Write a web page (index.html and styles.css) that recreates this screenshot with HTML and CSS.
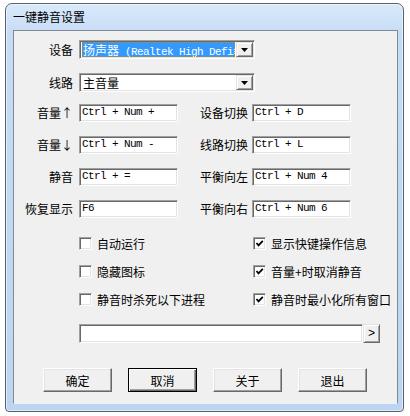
FILE: index.html
```html
<!DOCTYPE html>
<html lang="zh-CN">
<head>
  <meta charset="UTF-8" />
  <title>一键静音设置</title>
  <link rel="stylesheet" href="styles.css">
</head>
<body>

  <div class="window">
    <div class="titlebar">一键静音设置</div>

    <div class="client">

      <div class="row combo-row first">
        <span class="label">设备</span>
        <div class="combo">
          <div class="combo-value selected"><span class="cjk">扬声器</span><span class="mono"> (Realtek High Definition Audio)</span></div>
          <span class="drop"><svg width="7" height="4" viewBox="0 0 7 4"><polygon points="0,0 7,0 3.5,4" fill="#000"/></svg></span>
        </div>
      </div>

      <div class="row combo-row">
        <span class="label">线路</span>
        <div class="combo">
          <div class="combo-value"><span class="cjk">主音量</span></div>
          <span class="drop"><svg width="7" height="4" viewBox="0 0 7 4"><polygon points="0,0 7,0 3.5,4" fill="#000"/></svg></span>
        </div>
      </div>

      <div class="row key-row top">
        <span class="label">音量↑</span>
        <div class="textbox">Ctrl + Num +</div>
        <span class="label right">设备切换</span>
        <div class="textbox">Ctrl + D</div>
      </div>

      <div class="row key-row">
        <span class="label">音量↓</span>
        <div class="textbox">Ctrl + Num -</div>
        <span class="label right">线路切换</span>
        <div class="textbox">Ctrl + L</div>
      </div>

      <div class="row key-row">
        <span class="label">静音</span>
        <div class="textbox">Ctrl + =</div>
        <span class="label right">平衡向左</span>
        <div class="textbox">Ctrl + Num 4</div>
      </div>

      <div class="row key-row">
        <span class="label">恢复显示</span>
        <div class="textbox">F6</div>
        <span class="label right">平衡向右</span>
        <div class="textbox">Ctrl + Num 6</div>
      </div>

      <div class="checks">
        <label class="check"><span class="box"></span>自动运行</label>
        <label class="check"><span class="box"><svg width="9" height="9" viewBox="0 0 9 9"><polyline points="1.5,4 3.5,6.3 7.8,1.8" fill="none" stroke="#000" stroke-width="1.8"/></svg></span>显示快键操作信息</label>
        <label class="check"><span class="box"></span>隐藏图标</label>
        <label class="check"><span class="box"><svg width="9" height="9" viewBox="0 0 9 9"><polyline points="1.5,4 3.5,6.3 7.8,1.8" fill="none" stroke="#000" stroke-width="1.8"/></svg></span>音量+时取消静音</label>
        <label class="check"><span class="box"></span>静音时杀死以下进程</label>
        <label class="check"><span class="box"><svg width="9" height="9" viewBox="0 0 9 9"><polyline points="1.5,4 3.5,6.3 7.8,1.8" fill="none" stroke="#000" stroke-width="1.8"/></svg></span>静音时最小化所有窗口</label>
      </div>

      <div class="row path-row">
        <div class="textbox wide"></div>
        <span class="small-btn">&gt;</span>
      </div>

      <div class="buttons">
        <button class="btn">确定</button>
        <button class="btn default">取消</button>
        <button class="btn">关于</button>
        <button class="btn">退出</button>
      </div>

    </div>
  </div>

</body>
</html>
```

FILE: styles.css
```css
body {
  margin: 0;
  background: #fff;
  font-family: "Noto Sans CJK SC", sans-serif;
  font-size: 12px;
  color: #000;
}

.window {
  margin: 3px 0 0 5px;
  width: 397px;
  height: 407px;
  border: 1px solid #56616e;
  border-radius: 7px 7px 4px 4px;
  background: linear-gradient(#d9e9fb, #c6dcf4 30px, #bdd5f0);
  box-shadow: inset 0 0 0 1px rgba(255, 255, 255, 0.55);
  display: flex;
  flex-direction: column;
}

.titlebar {
  height: 26px;
  padding-left: 7px;
  display: flex;
  align-items: center;
  line-height: 14px;
}

.client {
  flex: 1;
  margin: 0 5px 7px 7px;
  border: 1px solid #7f8a98;
  border-bottom-color: #e9f1fb;
  background: #f0f0f0;
}

.row {
  display: flex;
  align-items: center;
}

.label {
  width: 59px;
  margin-right: 6px;
  text-align: right;
  line-height: 14px;
  white-space: nowrap;
}

.label.right {
  width: 48px;
  margin-left: 22px;
  margin-right: 4px;
  text-align: left;
}

.combo-row {
  height: 19px;
  margin-top: 14px;
}

.combo-row.first {
  margin-top: 9px;
}

.combo {
  width: 176px;
  height: 19px;
  box-sizing: border-box;
  padding: 1px;
  display: flex;
  background: #fff;
  border: 1px solid;
  border-color: #a0a0a0 #fff #fff #a0a0a0;
  box-shadow: inset 1px 1px 0 #696969, inset -1px -1px 0 #e3e3e3;
}

.combo-value {
  flex: 1;
  margin: 0 1px;
  padding-left: 1px;
  overflow: hidden;
  white-space: nowrap;
  line-height: 15px;
  height: 15px;
  box-sizing: border-box;
}

.combo-value.selected {
  background: #3399ff;
  color: #fff;
  outline: 1px dotted #c08a20;
  outline-offset: -1px;
}

.cjk {
  font-size: 12px;
}

.mono,
.textbox {
  font-family: "Liberation Mono", monospace;
  font-size: 11px;
  letter-spacing: -0.6px;
}

.drop,
.small-btn {
  width: 17px;
  height: 15px;
  box-sizing: border-box;
  display: flex;
  align-items: center;
  justify-content: center;
  background: #f0f0f0;
  border: 1px solid;
  border-color: #e3e3e3 #696969 #696969 #e3e3e3;
  box-shadow: inset 1px 1px 0 #fff, inset -1px -1px 0 #a0a0a0;
}

.key-row {
  height: 18px;
  margin-top: 14px;
}

.key-row.top {
  margin-top: 12px;
}

.textbox {
  width: 99px;
  height: 18px;
  box-sizing: border-box;
  padding-left: 2px;
  line-height: 15px;
  background: #fff;
  white-space: nowrap;
  border: 1px solid;
  border-color: #a0a0a0 #fff #fff #a0a0a0;
  box-shadow: inset 1px 1px 0 #696969, inset -1px -1px 0 #e3e3e3;
}

.checks {
  display: grid;
  grid-template-columns: 174px auto;
  row-gap: 15px;
  margin: 19px 0 0 65px;
}

.check {
  display: flex;
  align-items: center;
  gap: 5px;
  height: 13px;
  line-height: 13px;
  white-space: nowrap;
}

.box {
  width: 13px;
  height: 13px;
  box-sizing: border-box;
  display: flex;
  align-items: center;
  justify-content: center;
  background: #fff;
  border: 1px solid;
  border-color: #a0a0a0 #fff #fff #a0a0a0;
  box-shadow: inset 1px 1px 0 #696969, inset -1px -1px 0 #e3e3e3;
}

.path-row {
  margin: 18px 0 0 65px;
}

.textbox.wide {
  width: 284px;
  height: 19px;
}

.small-btn {
  height: 19px;
  font-family: "Liberation Mono", monospace;
  font-size: 12px;
  line-height: 1;
}

.buttons {
  display: flex;
  gap: 16px;
  margin: 25px 0 0 29px;
}

.btn {
  width: 69px;
  height: 24px;
  padding: 0;
  font-family: "Noto Sans CJK SC", sans-serif;
  font-size: 12px;
  color: #000;
  background: #f0f0f0;
  border: 1px solid;
  border-color: #fff #696969 #696969 #fff;
  box-shadow: inset -1px -1px 0 #a0a0a0, inset 1px 1px 0 #e3e3e3;
}

.btn.default {
  border-color: #000;
  box-shadow: inset 1px 1px 0 #fff, inset -1px -1px 0 #696969, inset -2px -2px 0 #a0a0a0;
}
```
